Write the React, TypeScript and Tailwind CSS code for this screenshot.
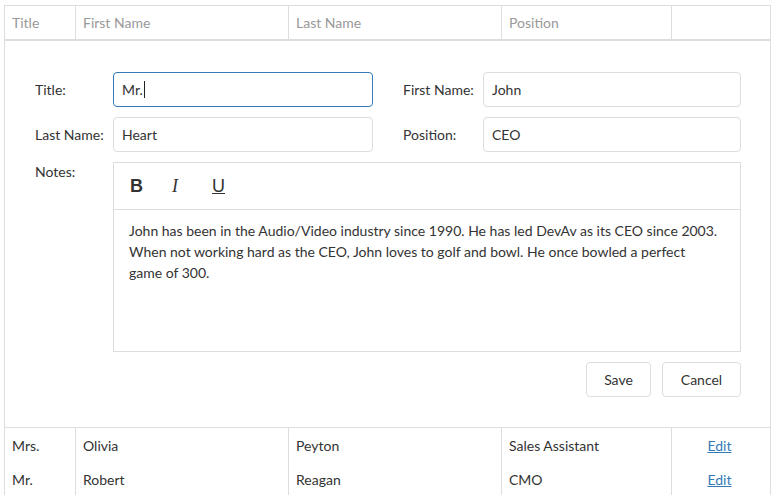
const font = { fontFamily: "Lato, 'Liberation Sans', sans-serif" }

function Field({ label, value, focused, labelW }: { label: string; value: string; focused?: boolean; labelW: string }) {
  return (
    <div className="flex items-center">
      <label className={`${labelW} shrink-0 text-[14px] text-[#333]`}>{label}</label>
      <div
        className={
          "flex-1 h-[35px] flex items-center px-[8px] rounded-[4px] border text-[14px] text-[#333] " +
          (focused ? "border-[#337ab7]" : "border-[#ddd]")
        }
      >
        {value}
        {focused && <span className="ml-[1px] inline-block w-[1px] h-[17px] bg-[#222]" />}
      </div>
    </div>
  )
}

function Row({ cells }: { cells: string[] }) {
  return (
    <div className="grid grid-cols-[71px_213px_213px_170px_1fr] h-[34px] text-[14px]">
      {cells.map((c, i) => (
        <div
          key={i}
          className={"flex items-center px-[7px] " + (i < 4 ? "border-r border-[#ddd]" : "justify-center pr-[10px]")}
        >
          {i === 4 ? (
            <a className="text-[#337ab7] underline">{c}</a>
          ) : (
            <span className="text-[#333]">{c}</span>
          )}
        </div>
      ))}
    </div>
  )
}

export default function App() {
  return (
    <div className="w-[773px] h-[495px] bg-white pt-[5px] px-[4px] overflow-hidden" style={font}>
      <div className="w-[767px] border-l border-r border-t border-[#ddd]">
        {/* header */}
        <div className="grid grid-cols-[71px_213px_213px_170px_1fr] h-[35px] border-b-[2px] border-[#ddd] text-[14px] text-[#999]">
          <div className="flex items-center px-[7px] border-r border-[#ddd]">Title</div>
          <div className="flex items-center px-[7px] border-r border-[#ddd]">First Name</div>
          <div className="flex items-center px-[7px] border-r border-[#ddd]">Last Name</div>
          <div className="flex items-center px-[7px] border-r border-[#ddd]">Position</div>
          <div />
        </div>

        {/* edit form */}
        <div className="pt-[31px] pb-[30px] pl-[30px] pr-[29px] border-b border-[#ddd]">
          <div className="grid grid-cols-2 gap-x-[30px] gap-y-[10px]">
            <Field label="Title:" value="Mr." focused labelW="w-[78px]" />
            <Field label="First Name:" value="John" labelW="w-[80px]" />
            <Field label="Last Name:" value="Heart" labelW="w-[78px]" />
            <Field label="Position:" value="CEO" labelW="w-[80px]" />
          </div>

          <div className="flex mt-[10px]">
            <label className="w-[78px] shrink-0 text-[14px] text-[#333] -mt-[1px]">Notes:</label>
            <div className="flex-1 h-[190px] border border-[#ddd] flex flex-col">
              <div className="h-[47px] border-b border-[#ddd] flex items-center pl-[16px] gap-[28px] text-[18px] text-[#333]">
                <span className="font-bold w-[14px]" style={{ fontFamily: "'Liberation Sans', sans-serif" }}>B</span>
                <span className="italic w-[12px]" style={{ fontFamily: "'Liberation Serif', serif" }}>I</span>
                <span className="underline w-[14px]" style={{ fontFamily: "'Liberation Sans', sans-serif" }}>U</span>
              </div>
              <div className="px-[15px] pt-[10px] text-[14px] leading-[21px] text-[#333]">
                John has been in the Audio/Video industry since 1990. He has led DevAv as its CEO since 2003.
                <br />
                When not working hard as the CEO, John loves to golf and bowl. He once bowled a perfect
                <br />
                game of 300.
              </div>
            </div>
          </div>

          <div className="flex justify-end gap-[11px] mt-[10px]">
            <button className="w-[65px] h-[35px] border border-[#ddd] rounded-[4px] text-[14px] text-[#333]">Save</button>
            <button className="w-[79px] h-[35px] border border-[#ddd] rounded-[4px] text-[14px] text-[#333]">Cancel</button>
          </div>
        </div>

        <Row cells={["Mrs.", "Olivia", "Peyton", "Sales Assistant", "Edit"]} />
        <Row cells={["Mr.", "Robert", "Reagan", "CMO", "Edit"]} />
      </div>
    </div>
  )
}
